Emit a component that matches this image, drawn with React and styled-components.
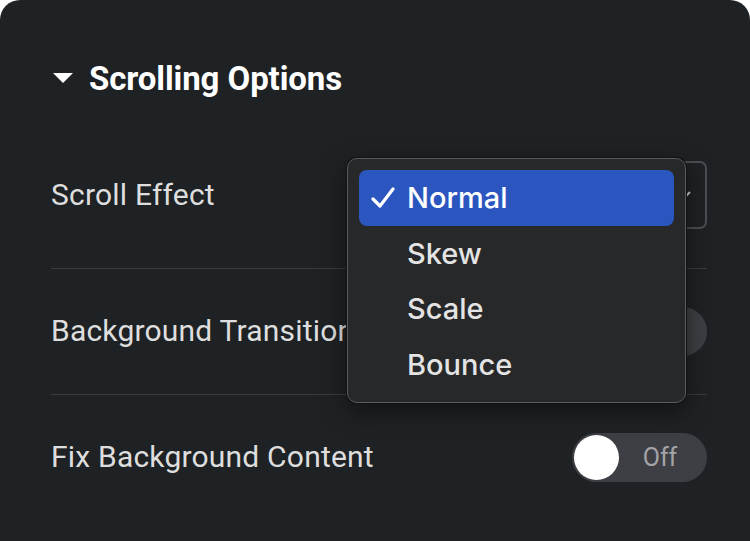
import styled, { createGlobalStyle } from "styled-components";

const GlobalStyle = createGlobalStyle`
  html, body {
    margin: 0;
    padding: 0;
    background: #ffffff;
  }
  * {
    box-sizing: border-box;
  }
`;

// Dark settings panel with rounded top corners
const Panel = styled.div`
  position: relative;
  width: 750px;
  height: 541px;
  background-color: #1f2224;
  border-radius: 20px 20px 0 0;
  padding: 60px 43px 0 51px;
  font-family: Roboto, "Liberation Sans", sans-serif;
  overflow: hidden;
`;

const SectionTitle = styled.div`
  display: flex;
  align-items: center;
  gap: 16px;
  height: 36px;
  color: #ffffff;
  font-size: 33px;
  font-weight: 700;
  letter-spacing: -0.1px;
`;

const Caret = styled.span`
  width: 0;
  height: 0;
  margin-left: 2px;
  border-left: 10px solid transparent;
  border-right: 10px solid transparent;
  border-top: 10px solid #ffffff;
`;

const RowList = styled.div`
  margin-top: 37px;
`;

const Row = styled.div`
  display: flex;
  align-items: center;
  justify-content: space-between;
  padding: 28px 0 ${(p) => (p.$first ? "39px" : "29px")};
  border-top: ${(p) => (p.$first ? "none" : "1px solid #393c3f")};
  min-height: 68px;
`;

const Label = styled.span`
  color: #dedede;
  font-size: 30px;
  letter-spacing: 0.2px;
  line-height: 68px;
  white-space: nowrap;
`;

const SelectBox = styled.div`
  width: 350px;
  height: 68px;
  border: 2px solid #4a4d51;
  border-radius: 7px;
  display: flex;
  align-items: center;
  justify-content: flex-end;
  padding-right: 14px;
`;

const Toggle = styled.div`
  display: flex;
  align-items: center;
  width: 135px;
  height: 49px;
  border-radius: 25px;
  background-color: #3e3f44;
  padding: 2px;
`;

const Knob = styled.span`
  width: 45px;
  height: 45px;
  border-radius: 50%;
  background-color: #ffffff;
`;

const ToggleText = styled.span`
  flex: 1;
  text-align: center;
  color: #a3a3a8;
  font-size: 25px;
  padding-right: 4px;
`;

// macOS-style native select popup laid over the select field
const Menu = styled.div`
  position: absolute;
  top: 158px;
  left: 347px;
  width: 339px;
  height: 245px;
  background-color: #272829;
  border: 1.5px solid #5a5b5e;
  border-radius: 10px;
  box-shadow: 0 0 0 1px #111213, 0 8px 24px rgba(0, 0, 0, 0.5);
  padding: 11px 11px;
  font-family: Inter, Roboto, "Liberation Sans", sans-serif;
`;

const MenuItem = styled.div`
  display: flex;
  align-items: center;
  height: 55.5px;
  border-radius: 8px;
  padding-left: 12px;
  background-color: ${(p) => (p.$active ? "#2b56c0" : "transparent")};
  color: ${(p) => (p.$active ? "#ffffff" : "#e4e4e4")};
  font-size: 29px;
  font-weight: 500;
`;

const CheckSlot = styled.span`
  display: inline-flex;
  width: 36px;
`;

const Check = () => (
  <svg width="24" height="22" viewBox="0 0 24 22">
    <path
      d="M2 12 L9 19 L22 2"
      fill="none"
      stroke="#ffffff"
      strokeWidth="3.2"
      strokeLinecap="round"
      strokeLinejoin="round"
    />
  </svg>
);

const Chevron = () => (
  <svg width="12" height="8" viewBox="0 0 12 8">
    <path d="M1 1 L6 6 L11 1" fill="none" stroke="#cfcfcf" strokeWidth="2" />
  </svg>
);

const options = ["Normal", "Skew", "Scale", "Bounce"];

const App = () => {
  return (
    <>
      <GlobalStyle />
      <Panel>
        <SectionTitle>
          <Caret />
          Scrolling Options
        </SectionTitle>
        <RowList>
          <Row $first>
            <Label>Scroll Effect</Label>
            <SelectBox>
              <Chevron />
            </SelectBox>
          </Row>
          <Row>
            <Label>Background Transition</Label>
            <Toggle>
              <Knob />
              <ToggleText>Off</ToggleText>
            </Toggle>
          </Row>
          <Row>
            <Label>Fix Background Content</Label>
            <Toggle>
              <Knob />
              <ToggleText>Off</ToggleText>
            </Toggle>
          </Row>
        </RowList>
        <Menu>
          {options.map((o, i) => (
            <MenuItem key={o} $active={i === 0}>
              <CheckSlot>{i === 0 && <Check />}</CheckSlot>
              {o}
            </MenuItem>
          ))}
        </Menu>
      </Panel>
    </>
  );
};

export default App;
